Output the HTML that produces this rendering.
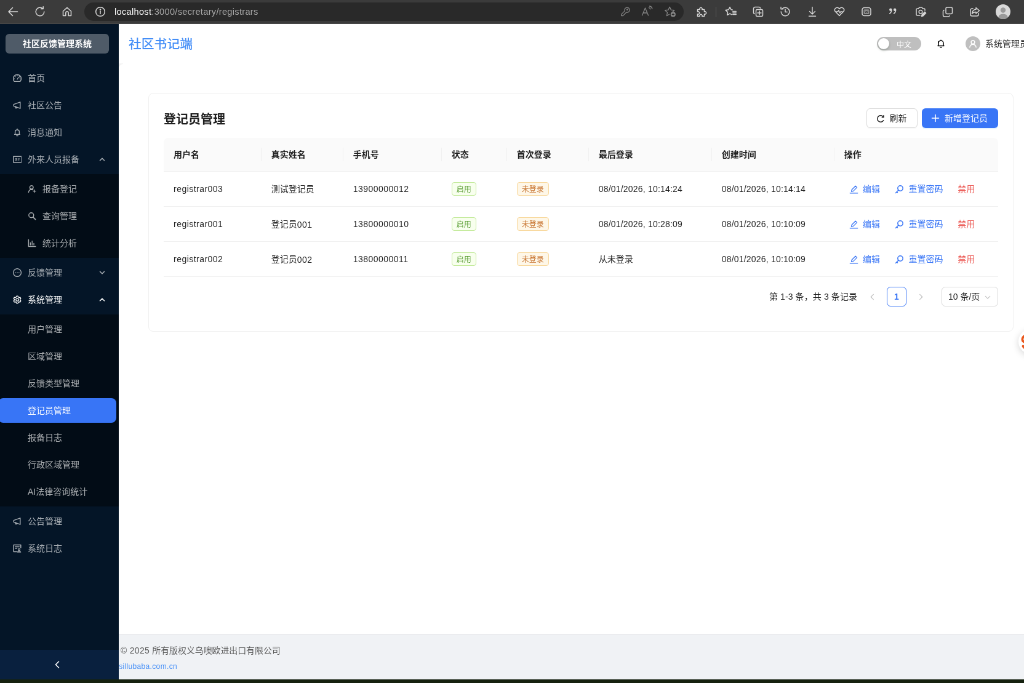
<!DOCTYPE html>
<html lang="zh-CN">
<head>
<meta charset="utf-8">
<title>登记员管理</title>
<style>
*{box-sizing:border-box}
html,body{margin:0;padding:0}
body{width:1024px;height:683px;overflow:hidden;background:#15210f;font-family:"Liberation Sans","Noto Sans CJK SC",sans-serif;font-size:14px;color:rgba(0,0,0,.88)}
#root{will-change:transform;position:absolute;left:0;top:0;width:1664px;height:1110px;transform:scale(.615385);transform-origin:0 0;overflow:hidden;background:#15210f}
svg{display:block}
/* ---------- browser chrome ---------- */
#chrome{position:absolute;left:0;top:0;width:1664px;height:39px;background:#3b3b3b;border-bottom:1px solid #4a4a4a}
#chrome .ic{position:absolute;top:9px;width:20px;height:20px;fill:none;stroke:#d6d6d6;stroke-width:1.5;stroke-linecap:round;stroke-linejoin:round}
#chrome .ic.dim{stroke:#858585;stroke-width:1.3}
#pill{position:absolute;left:137px;top:4px;width:974px;height:30px;border-radius:15px;background:#292929}
#url{position:absolute;left:186px;top:0;height:38px;line-height:38px;font-size:14.6px;color:#a8a8a8;white-space:nowrap;letter-spacing:.3px}
#url b{font-weight:400;color:#fff}
#sep{position:absolute;left:1163px;top:11px;width:1px;height:17px;background:#5a5a5a}
#avatar0{position:absolute;left:1618px;top:7px;width:24px;height:24px;border-radius:50%;background:#d9d9d9;overflow:hidden}
/* ---------- page ---------- */
#page{position:absolute;left:0;top:39px;width:1664px;height:1065px;overflow:hidden;background:#fff}
#inner{position:absolute;left:-7px;top:0;width:1710px;height:1065px}
/* sidebar */
#sider{position:absolute;left:0;top:0;width:200px;height:1065px;background:#041527;z-index:5;color:rgba(255,255,255,.65)}
#logo{height:32px;margin:16px 16px 20px;background:rgba(255,255,255,.3);border-radius:6px;color:#fff;font-weight:700;text-align:center;line-height:32px;font-size:14px}
.mi{position:relative;height:40px;margin:4px 4px 0;padding-left:24px;line-height:40px;border-radius:8px;white-space:nowrap}
.mi svg.i{position:absolute;left:24px;top:13px;width:14px;height:14px;fill:none;stroke:currentColor;stroke-width:1.4;stroke-linecap:round;stroke-linejoin:round}
.mi span{position:absolute;left:48px;top:0}
.mi svg.arr{position:absolute;right:18.500px;top:15px;width:10px;height:10px;fill:none;stroke:currentColor;stroke-width:1.6;stroke-linecap:round;stroke-linejoin:round}
.sub{background:#020c16;padding:0 0 4px;margin-top:4px;overflow:hidden}
.sub .mi{padding-left:48px}
.sub .mi svg.i{left:48px}
.sub .mi span{left:72px}
.sub.noic .mi span{left:48px}
.mi.on{color:#fff}
.mi.sel{background:#3875f6;color:#fff}
#trigger{position:absolute;left:0;bottom:0;width:200px;height:48px;background:#09203e;color:#fff}
#trigger svg{position:absolute;left:93px;top:17px;width:14px;height:14px;fill:none;stroke:#fff;stroke-width:1.6;stroke-linecap:round;stroke-linejoin:round}
/* header */
#header{position:absolute;left:200px;top:0;width:1510px;height:64px;background:#fff}
#htitle{position:absolute;left:16px;top:.700px;line-height:64px;font-size:20.8px;font-weight:500;color:#448ef7;white-space:nowrap}
#switch{position:absolute;left:1232px;top:21px;width:72px;height:22px;border-radius:11px;background:#bfbfbf;color:#fff;font-size:12px;line-height:22px}
#switch i{position:absolute;left:2px;top:2px;width:18px;height:18px;border-radius:50%;background:#fff;box-shadow:0 2px 4px rgba(0,35,11,.2)}
#switch span{position:absolute;left:32px;top:1.500px}
#bell{position:absolute;left:1328px;top:24px;width:16px;height:16px;fill:none;stroke:#000;stroke-width:1.5;stroke-linejoin:round;stroke-linecap:round}
#uav{position:absolute;left:1376px;top:20px;width:24px;height:24px;border-radius:50%;background:#bfbfbf}
#uav svg{position:absolute;left:5px;top:5px;width:14px;height:14px;fill:none;stroke:#fff;stroke-width:1.5;stroke-linecap:round}
#uname{position:absolute;left:1408px;top:0;line-height:64px;white-space:nowrap;color:rgba(0,0,0,.85)}
/* card */
#card{position:absolute;left:248px;top:112px;width:1406px;height:388px;border:1px solid #f0f0f0;border-radius:8px;background:#fff}
#ctitle{position:absolute;left:24px;top:26px;line-height:32px;font-size:20px;font-weight:700;color:rgba(0,0,0,.88);white-space:nowrap}
.btn{position:absolute;top:24px;height:32px;border-radius:6px;line-height:30px;white-space:nowrap;font-size:14px}
#b1{left:1165.500px;width:83px;border:1px solid #d9d9d9;background:#fff;box-shadow:0 2px 0 rgba(0,0,0,.02)}
#b2{left:1256px;width:124px;background:#3875f6;color:#fff;line-height:32px;box-shadow:0 2px 0 rgba(5,145,255,.1)}
.btn svg{position:absolute;left:15px;top:9px;width:14px;height:14px;fill:none;stroke:currentColor;stroke-width:1.5;stroke-linecap:round}
.btn span{position:absolute;left:37px;top:0}
#b2 span{top:0}
table{position:absolute;left:24px;top:72px;width:1356px;border-collapse:separate;border-spacing:0;table-layout:fixed}
th{height:55px;padding-bottom:1.500px !important;background:#fafafa;font-weight:700;text-align:left;padding:0 16px;border-bottom:1px solid #f0f0f0;position:relative;font-size:14px}
th:first-child{border-top-left-radius:8px}
th:last-child{border-top-right-radius:8px}
th:not(:last-child)::after{content:"";position:absolute;right:0;top:16px;width:1px;height:22px;background:#f0f0f0}
td{height:57px;padding:0 16px;border-bottom:1px solid #f0f0f0;white-space:nowrap}
.c{position:relative;top:-.900px}
.l{letter-spacing:.47px}
.dt{letter-spacing:.2px}
.tag{display:inline-block;height:22px;line-height:20px;padding:1.300px 7px 0;font-size:12px;border-radius:4px;border:1px solid;letter-spacing:0;vertical-align:middle}
.tg{color:#569c30;background:#f8ffee;border-color:#c2ea99}
.to{color:#c6712b;background:#fef7e8;border-color:#f8d79a}
.ops{position:relative;height:56px;letter-spacing:0}
.ops a{position:absolute;top:0;line-height:56px;color:#3875f6;white-space:nowrap}
.ops a.d{color:#ec5b56}
.ops svg{position:absolute;top:20.500px;width:15px;height:15px;fill:none;stroke:#3875f6;stroke-width:1.4;stroke-linecap:round;stroke-linejoin:round}
/* pagination */
#pg{position:absolute;left:24px;top:314px;width:1356px;height:32px;line-height:32px}
#pg .t{position:absolute;left:984px;top:0;white-space:nowrap;letter-spacing:.1px}
#pg svg{position:absolute;top:11px;width:11px;height:11px;fill:none;stroke:rgba(0,0,0,.25);stroke-width:1.3;stroke-linecap:round;stroke-linejoin:round}
#pg .cur{position:absolute;left:1175px;top:0;width:32px;height:32px;border:1px solid #3875f6;border-radius:6px;color:#3875f6;text-align:center;line-height:30px;font-weight:600}
#pg .sel{position:absolute;left:1264px;top:0;width:92px;height:32px;border:1px solid #d9d9d9;border-radius:6px;line-height:30px;padding-left:10px}
/* footer */
#footer{position:absolute;left:200px;top:991px;width:1510px;height:74px;background:#f0f2f5;border-top:1px solid #e4e5e8}
#footer .l1{position:absolute;left:3px;font-size:13.900px;top:14.500px;line-height:22px;color:#595959;white-space:nowrap}
#footer .l2{position:absolute;right:1415px;top:41.500px;line-height:20px;font-size:12px;color:#448ef7;white-space:nowrap;letter-spacing:.34px}
#fab{position:absolute;left:1661.500px;top:496px;width:40px;height:40px;border-radius:50%;background:#fff;box-shadow:0 3px 12px rgba(0,0,0,.16)}
#fab svg{width:40px;height:40px;fill:none;stroke:#e9571c;stroke-width:3.800;stroke-linecap:round}
</style>
</head>
<body>
<div id="root">
<div id="chrome">
  <div id="pill"></div>
  <div id="url"><b>localhost</b>:3000/secretary/registrars</div>
  <svg class="ic" style="left:11px" viewBox="0 0 20 20"><path d="M17.500 10H3M9.500 3.500 3 10l6.500 6.500"/></svg>
  <svg class="ic" style="left:55px" viewBox="0 0 20 20"><path d="M16.800 10a6.800 6.800 0 1 1-2.200-5M15.200 1.800v3.600h-3.600"/></svg>
  <svg class="ic" style="left:99px" viewBox="0 0 20 20"><path d="M3.500 9.200 10 3.200l6.500 6v7.300h-4.300v-4.600a2.200 2.200 0 0 0-4.400 0v4.600H3.500z"/></svg>
  <svg class="ic" style="left:152.5px" viewBox="0 0 20 20"><circle cx="10" cy="10" r="7.300"/><path d="M10 9.200v4.200"/><circle cx="10" cy="6.600" r=".6" fill="#d6d6d6"/></svg>
  <svg class="ic dim" style="left:1006px" viewBox="0 0 20 20"><path d="M9.300 8.600a4 4 0 1 1 2.600 2.400L6.300 16.600H3.800V14.100z"/><circle cx="13.300" cy="6.700" r=".7"/></svg>
  <svg class="ic dim" style="left:1041px" viewBox="0 0 20 20"><path d="M2.500 16 7.500 4l5 12M4.200 12h6.600M13.500 3.500c1.200.2 2 1.100 2.200 2.300M14.500 1c2.300.4 4 2.100 4.300 4.400"/></svg>
  <svg class="ic dim" style="left:1079px" viewBox="0 0 20 20"><path d="M8.600 14.200 4.400 16.600l1.100-5.300-3.900-3.600 5.300-.6L9.200 2.300l2.300 4.800 5.300.6-2.600 2.400"/><circle cx="14.800" cy="14.400" r="3.400" fill="#8f8f8f"/><path d="M14.800 12.800v3.200M13.200 14.400h3.200" stroke="#292929"/></svg>
  <svg class="ic" style="left:1130px" viewBox="0 0 20 20"><path d="M3.500 6.500H7.200a2.100 2.100 0 1 1 3.600 0H14.500V10.200a2.100 2.100 0 1 1 0 3.600V17.500H10.800a2.100 2.100 0 1 0-3.600 0H3.500V13.800a2.100 2.100 0 1 0 0-3.600z"/></svg>
  <svg class="ic" style="left:1177.5px" viewBox="0 0 20 20"><path d="M10.800 14.600 8 13.100 3.600 15.500l.9-4.800L1 7.400l4.800-.6L8 2.500l2.200 4.300 2 .3M12.800 9.500h5.400M12.800 12h5.400M12.800 14.500h5.400"/></svg>
  <svg class="ic" style="left:1222px" viewBox="0 0 20 20"><rect x="6.500" y="6.500" width="11" height="11" rx="2"/><path d="M4.200 13.500A2 2 0 0 1 2.500 11.500V5A2.500 2.500 0 0 1 5 2.500H11.500a2 2 0 0 1 2 1.700M12 9v6M9 12h6"/></svg>
  <svg class="ic" style="left:1265.6px" viewBox="0 0 20 20"><path d="M3.200 10a6.800 6.800 0 1 0 2-4.800M3 2.500v3.300h3.300M10 6v4.400h3.200"/></svg>
  <svg class="ic" style="left:1309.5px" viewBox="0 0 20 20"><path d="M10 2.500v11M5.500 9.500 10 14l4.500-4.500M4.500 17.300h11" stroke-width="1.400"/></svg>
  <svg class="ic" style="left:1354px" viewBox="0 0 20 20"><path d="M10 16.500 3.400 9.800a3.900 3.900 0 0 1 5.500-5.500L10 5.400l1.100-1.100a3.900 3.900 0 0 1 5.500 5.500z"/><path d="M5 10h2.500l1.300-2.200 2 4.200 1.300-2h2.700"/></svg>
  <svg class="ic" style="left:1398px" viewBox="0 0 20 20"><rect x="3" y="3.500" width="14" height="13" rx="3.500"/><rect x="5.400" y="6.200" width="9.200" height="7.800" rx="1.500" fill="#8a8a8a" stroke="none"/><path d="M7.500 8.500l1.200 3.400L10 9l1.300 2.900 1.200-3.400" stroke="#3b3b3b" stroke-width="1"/></svg>
  <svg class="ic" style="left:1441px" viewBox="0 0 20 20"><circle cx="6.300" cy="6.800" r="2.200" fill="#d6d6d6" stroke="none"/><path d="M7.800 7.200c0 2.800-1.100 4.700-3.100 5.900"/><circle cx="13.100" cy="6.800" r="2.200" fill="#d6d6d6" stroke="none"/><path d="M14.600 7.200c0 2.800-1.100 4.700-3.100 5.900"/></svg>
  <svg class="ic" style="left:1486px" viewBox="0 0 20 20"><path d="M9 16H4.500A1.500 1.500 0 0 1 3 14.500v-8A1.500 1.500 0 0 1 4.500 5h2L8 3h4l1.500 2h2A1.500 1.500 0 0 1 17 6.500V8"/><circle cx="10" cy="10.300" r="2.800"/><path d="M11.500 17.500l.6-2.400 4.700-4.700 1.800 1.800-4.700 4.700z" fill="#d6d6d6"/></svg>
  <svg class="ic" style="left:1530px" viewBox="0 0 20 20"><rect x="7" y="3" width="10.500" height="10.500" rx="2"/><path d="M13 16.500a2 2 0 0 1-2 1.500H5a2.500 2.500 0 0 1-2.500-2.500V9.500A2 2 0 0 1 4 7.600"/></svg>
  <svg class="ic" style="left:1574px" viewBox="0 0 20 20"><path d="M16 12.500v2A2.500 2.500 0 0 1 13.500 17h-8A2.500 2.500 0 0 1 3 14.500v-7A2.500 2.500 0 0 1 5.500 5H7M12 3.500l5.500 4.700L12 13V10.400c-3-.1-5 .8-6.500 3 .3-4 2.500-6.700 6.500-7.100z"/></svg>
  <div id="sep"></div>
  <div id="avatar0"><svg viewBox="0 0 24 24" style="width:24px;height:24px"><circle cx="12" cy="9.500" r="4.200" fill="#9a9a9a"/><ellipse cx="12" cy="21" rx="7.500" ry="5.500" fill="#9a9a9a"/></svg></div>
</div>
<div id="page"><div id="inner">
  <div id="sider">
    <div id="logo">社区反馈管理系统</div>
    <div id="menu">
      <div class="mi"><svg class="i" viewBox="0 0 14 14"><path d="M2.400 12.400a6.500 6.500 0 1 1 9.200 0z"/><path d="M7 8.800 9.200 5.400M7 2.600v.8M3.400 4.300l.6.600M10.900 4.500l-.5.500M1.900 8h.8M11.300 8h.8" stroke-width="1.200"/></svg><span>首页</span></div>
      <div class="mi"><svg class="i" viewBox="0 0 14 14"><path d="M1.300 5.600 11.800 1.800V12.200L1.300 8.400z"/><path d="M4 9.400v2.200h2.400V10.300"/></svg><span>社区公告</span></div>
      <div class="mi"><svg class="i" viewBox="0 0 14 14"><path d="M3.600 10.400V6.400a3.400 3.400 0 0 1 6.800 0v4M2.600 10.400h8.800M5.800 12.600h2.400M7 1.400v1.400"/></svg><span>消息通知</span></div>
      <div class="mi"><svg class="i" viewBox="0 0 14 14"><rect x=".7" y="2.200" width="13.200" height="9.800" rx=".5" stroke-width="1.500"/><circle cx="5.200" cy="6.300" r="1" stroke-width="1"/><path d="M3.800 8.700c.3-.9 2.500-.9 2.800 0M8.200 6h2.400M8.200 8h1.800" stroke-width="1"/></svg><span>外来人员报备</span><svg class="arr" viewBox="0 0 10 10"><path d="M1.500 6.800 5 3.300 8.500 6.800"/></svg></div>
      <div class="sub">
        <div class="mi"><svg class="i" viewBox="0 0 14 14"><circle cx="6.200" cy="4.400" r="2.800"/><path d="M1.400 12.600c.4-3 2.300-4.600 4.800-4.600 1 0 1.900.3 2.600.8M11 8.600v4M9 10.600h4"/></svg><span>报备登记</span></div>
        <div class="mi"><svg class="i" viewBox="0 0 14 14"><circle cx="5.800" cy="5.800" r="4"/><path d="M8.800 8.800 12.600 12.600" stroke-width="1.800"/></svg><span>查询管理</span></div>
        <div class="mi"><svg class="i" viewBox="0 0 14 14"><path d="M1.400 1.600V12.400H12.800" stroke-width="1.500"/><path d="M4.400 10V6.400M7.200 10V3.600M10 10V7.400" stroke-width="1.300"/></svg><span>统计分析</span></div>
      </div>
      <div class="mi"><svg class="i" viewBox="0 0 14 14"><circle cx="7" cy="7" r="6.400" stroke-width="1.300"/><circle cx="4.100" cy="7" r=".75" fill="currentColor" stroke="none"/><circle cx="7" cy="7" r=".75" fill="currentColor" stroke="none"/><circle cx="9.900" cy="7" r=".75" fill="currentColor" stroke="none"/></svg><span>反馈管理</span><svg class="arr" viewBox="0 0 10 10"><path d="M1.500 3.300 5 6.800 8.500 3.300"/></svg></div>
      <div class="mi on"><svg class="i" viewBox="0 0 14 14"><path d="M5.900 1.100h2.200l.5 1.500 1.500.9 1.600-.4 1.100 1.900-1.100 1.200v1.600l1.100 1.200-1.100 1.900-1.600-.4-1.500.9-.5 1.500H5.900l-.5-1.500-1.500-.9-1.600.4-1.100-1.900 1.100-1.200V6.200L1.200 5l1.100-1.900 1.600.4 1.500-.9z" stroke-width="1.300"/><circle cx="7" cy="7" r="2.200" stroke-width="1.300"/></svg><span>系统管理</span><svg class="arr" viewBox="0 0 10 10"><path d="M1.500 6.800 5 3.300 8.500 6.800"/></svg></div>
      <div class="sub noic">
        <div class="mi"><span>用户管理</span></div>
        <div class="mi"><span>区域管理</span></div>
        <div class="mi"><span>反馈类型管理</span></div>
        <div class="mi sel"><span>登记员管理</span></div>
        <div class="mi"><span>报备日志</span></div>
        <div class="mi"><span>行政区域管理</span></div>
        <div class="mi"><span>AI法律咨询统计</span></div>
      </div>
      <div class="mi"><svg class="i" viewBox="0 0 14 14"><path d="M1.300 5.600 11.800 1.800V12.200L1.300 8.400z"/><path d="M4 9.400v2.200h2.400V10.300"/></svg><span>公告管理</span></div>
      <div class="mi"><svg class="i" viewBox="0 0 14 14"><path d="M12.800 6.200V1.400H1.200V12.600H6.200M3.800 4.400H10.200" stroke-width="1.500"/><path d="M3.800 7.200H6.500" stroke-width="1.200"/><circle cx="10" cy="9.200" r="1.500" stroke-width="1.200"/><path d="M7.300 13.100c.3-1.800 5.100-1.800 5.400 0z" stroke-width="1.200"/></svg><span>系统日志</span></div>
    </div>
    <div id="trigger"><svg viewBox="0 0 14 14"><path d="M9.5 2 L4.5 7 L9.5 12"/></svg></div>
  </div>
  <div id="header">
    <div id="htitle">社区书记端</div>
    <div id="switch"><i></i><span>中文</span></div>
    <svg id="bell" viewBox="0 0 16 16"><path d="M4 11.5V7a4 4 0 0 1 8 0v4.5M3 11.5h10M6.8 13.8h2.4M8 2.2V3"/></svg>
    <div id="uav"><svg viewBox="0 0 14 14"><circle cx="7" cy="4.6" r="2.9"/><path d="M1.8 12.8c.6-3 2.6-4.6 5.2-4.6s4.600 1.600 5.200 4.600"/></svg></div>
    <div id="uname">系统管理员</div>
  </div>
  <div style="position:absolute;left:200px;top:64px;width:7px;height:5px;background:#f3f3f3"><div style="position:absolute;left:1px;top:1px;width:8px;height:8px;background:#fff;border-top-left-radius:6px"></div></div>
  <div id="card">
    <div id="ctitle">登记员管理</div>
    <div class="btn" id="b1"><svg viewBox="0 0 14 14"><path d="M11.600 9.700A5.300 5.300 0 1 1 11.600 4.200M11.900 1.800V4.400H9.300"/></svg><span>刷新</span></div>
    <div class="btn" id="b2"><svg viewBox="0 0 14 14"><path d="M7 1.500V12.500M1.500 7H12.500"/></svg><span>新增登记员</span></div>
    <table>
      <colgroup><col style="width:158.700px"><col style="width:133px"><col style="width:160px"><col style="width:106px"><col style="width:133px"><col style="width:200px"><col style="width:199px"><col style="width:266.300px"></colgroup>
      <thead><tr><th>用户名</th><th>真实姓名</th><th>手机号</th><th>状态</th><th>首次登录</th><th>最后登录</th><th>创建时间</th><th>操作</th></tr></thead>
      <tbody>
      <tr><td class="l">registrar003</td><td><span class="c">测试登记员</span></td><td class="l">13900000012</td><td><span class="tag tg">启用</span></td><td><span class="tag to">未登录</span></td><td class="dt">08/01/2026, 10:14:24</td><td class="dt">08/01/2026, 10:14:14</td><td><div class="ops"><svg style="left:8px" viewBox="0 0 14 14"><path d="M3.300 10.300 3.900 7.700 9.500 2.100 11.700 4.300 6.100 9.900z" stroke-width="1.200"/><path d="M1.200 12.900h11.600" stroke-width="1.300"/></svg><a style="left:30.300px">编辑</a><svg style="left:82px" viewBox="0 0 14 14"><circle cx="8.400" cy="5.600" r="3.900"/><path d="M5.600 8.400 1.400 12.600M3 11l1.200 1.200"/></svg><a style="left:104.800px">重置密码</a><a class="d" style="left:184.500px">禁用</a></div></td></tr>
      <tr><td class="l">registrar001</td><td><span class="c">登记员</span><span class="l">001</span></td><td class="l">13800000010</td><td><span class="tag tg">启用</span></td><td><span class="tag to">未登录</span></td><td class="dt">08/01/2026, 10:28:09</td><td class="dt">08/01/2026, 10:10:09</td><td><div class="ops"><svg style="left:8px" viewBox="0 0 14 14"><path d="M3.300 10.300 3.900 7.700 9.500 2.100 11.700 4.300 6.100 9.900z" stroke-width="1.200"/><path d="M1.200 12.900h11.600" stroke-width="1.300"/></svg><a style="left:30.300px">编辑</a><svg style="left:82px" viewBox="0 0 14 14"><circle cx="8.400" cy="5.600" r="3.900"/><path d="M5.600 8.400 1.400 12.600M3 11l1.200 1.200"/></svg><a style="left:104.800px">重置密码</a><a class="d" style="left:184.500px">禁用</a></div></td></tr>
      <tr><td class="l">registrar002</td><td><span class="c">登记员</span><span class="l">002</span></td><td class="l">13800000011</td><td><span class="tag tg">启用</span></td><td><span class="tag to">未登录</span></td><td><span class="c">从未登录</span></td><td class="dt">08/01/2026, 10:10:09</td><td><div class="ops"><svg style="left:8px" viewBox="0 0 14 14"><path d="M3.300 10.300 3.900 7.700 9.500 2.100 11.700 4.300 6.100 9.900z" stroke-width="1.200"/><path d="M1.200 12.900h11.600" stroke-width="1.300"/></svg><a style="left:30.300px">编辑</a><svg style="left:82px" viewBox="0 0 14 14"><circle cx="8.400" cy="5.600" r="3.900"/><path d="M5.600 8.400 1.400 12.600M3 11l1.200 1.200"/></svg><a style="left:104.800px">重置密码</a><a class="d" style="left:184.500px">禁用</a></div></td></tr>
      </tbody>
    </table>
    <div id="pg">
      <div class="t">第 1-3 条，共 3 条记录</div>
      <svg style="left:1145.500px" viewBox="0 0 12 12"><path d="M8 1.500 L3.500 6 L8 10.500"/></svg>
      <div class="cur">1</div>
      <svg style="left:1224.500px" viewBox="0 0 12 12"><path d="M4 1.500 L8.500 6 L4 10.500"/></svg>
      <div class="sel">10 条/页<svg style="left:69px;top:10.500px;width:10px;height:10px" viewBox="0 0 12 12"><path d="M1.500 4 L6 8.500 L10.500 4"/></svg></div>
    </div>
  </div>
  <div id="footer">
    <div class="l1"><span style="letter-spacing:.35px">© 2025 </span>所有版权义乌噢欧进出口有限公司</div>
    <div class="l2">www.sillubaba.com.cn</div>
  </div>
  <div id="fab"><svg viewBox="0 0 40 40"><path d="M17 11.500C9 8 4 15 7.500 19.500 10 22 15 21.500 17 25"/><path d="M7.500 27.500C9 31 13 31.500 17 30.500"/></svg></div>
</div></div>
</div>
</body>
</html>
